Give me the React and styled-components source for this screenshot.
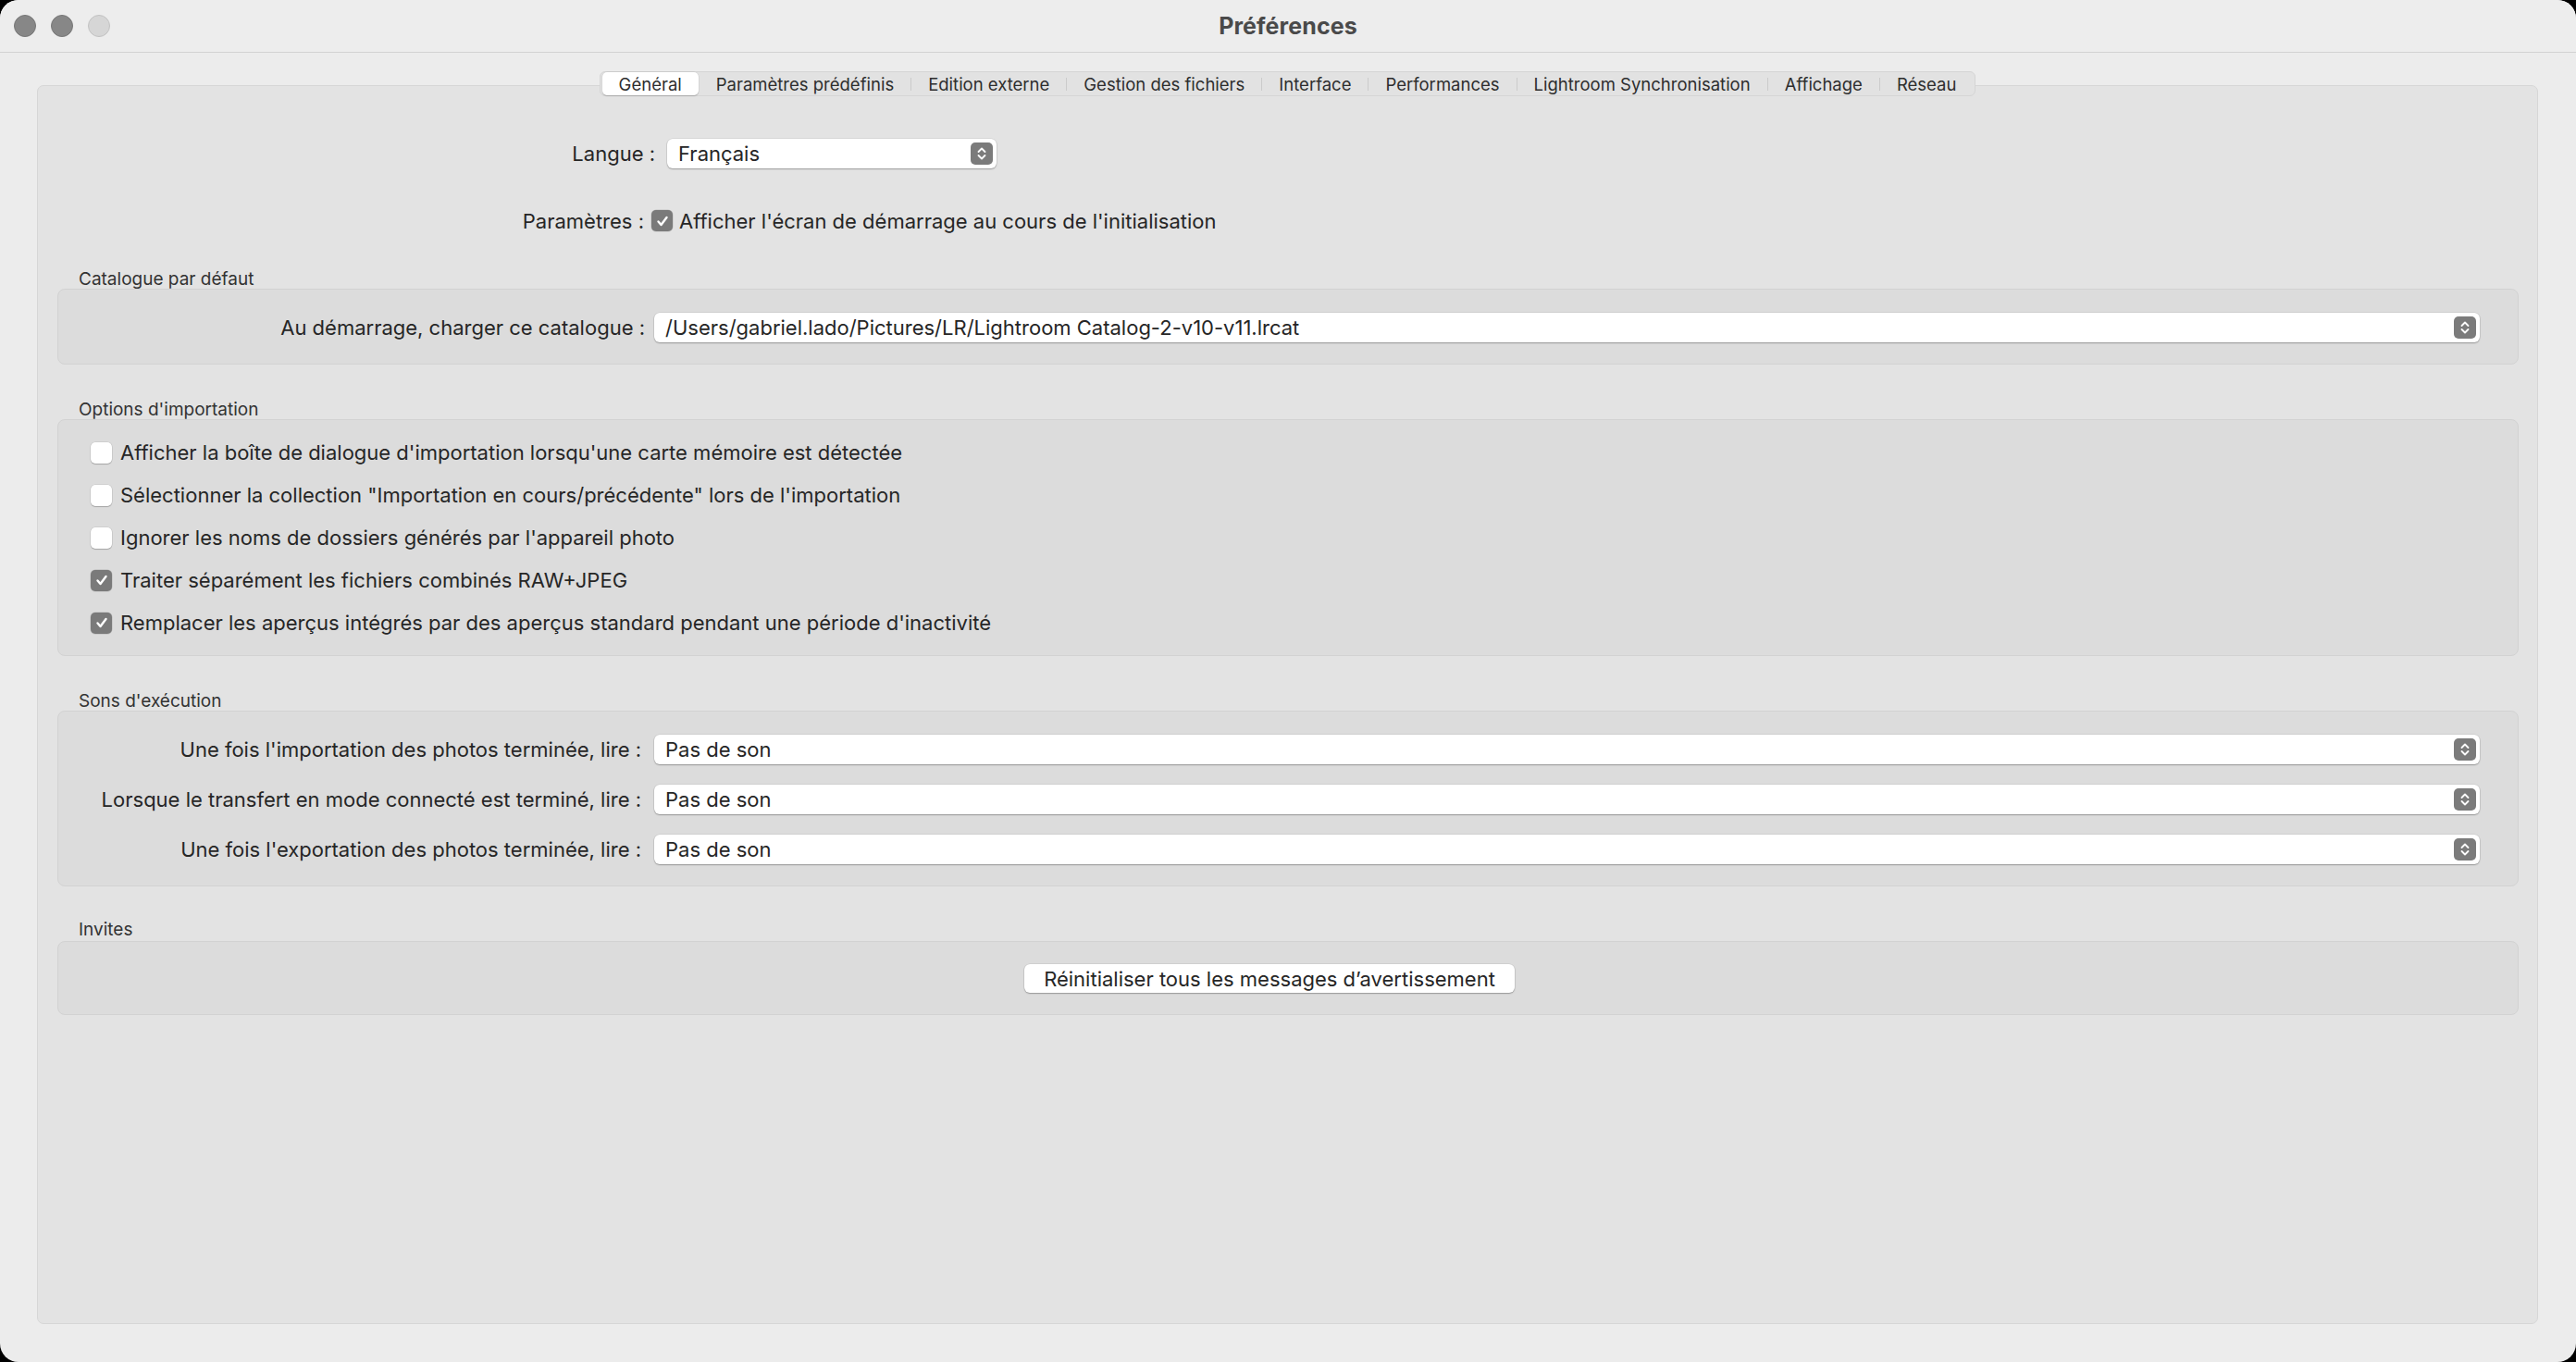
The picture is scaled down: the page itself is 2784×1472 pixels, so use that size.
import React from "react";
import styled, { createGlobalStyle } from "styled-components";

const GlobalStyle = createGlobalStyle`
  html, body {
    margin: 0;
    padding: 0;
    background: #000;
  }
  body {
    font-family: Inter, "Noto Sans", "Liberation Sans", sans-serif;
    color: #262626;
    -webkit-font-smoothing: antialiased;
  }
`;

const tabs = [
  "Général",
  "Paramètres prédéfinis",
  "Edition externe",
  "Gestion des fichiers",
  "Interface",
  "Performances",
  "Lightroom Synchronisation",
  "Affichage",
  "Réseau",
];

const importOptions = [
  { label: "Afficher la boîte de dialogue d'importation lorsqu'une carte mémoire est détectée", checked: false },
  { label: 'Sélectionner la collection "Importation en cours/précédente" lors de l\'importation', checked: false },
  { label: "Ignorer les noms de dossiers générés par l'appareil photo", checked: false },
  { label: "Traiter séparément les fichiers combinés RAW+JPEG", checked: true },
  { label: "Remplacer les aperçus intégrés par des aperçus standard pendant une période d'inactivité", checked: true },
];

const sounds = [
  "Une fois l'importation des photos terminée, lire :",
  "Lorsque le transfert en mode connecté est terminé, lire :",
  "Une fois l'exportation des photos terminée, lire :",
];

const Stepper = () => (
  <StepperBox>
    <svg width="12" height="16" viewBox="0 0 12 16">
      <path d="M2.5 6 L6 2.5 L9.5 6" fill="none" stroke="#fff" strokeWidth="1.8" strokeLinecap="round" strokeLinejoin="round" />
      <path d="M2.5 10 L6 13.5 L9.5 10" fill="none" stroke="#fff" strokeWidth="1.8" strokeLinecap="round" strokeLinejoin="round" />
    </svg>
  </StepperBox>
);

const Select = ({ value, width }) => (
  <SelectBox $width={width}>
    <span>{value}</span>
    <Stepper />
  </SelectBox>
);

const Check = ({ checked }) => (
  <CheckBox $checked={checked}>
    {checked && (
      <svg width="16" height="16" viewBox="0 0 16 16">
        <path d="M3.5 8.5 L6.5 12 L12.5 4" fill="none" stroke="#fff" strokeWidth="2.4" strokeLinecap="round" strokeLinejoin="round" />
      </svg>
    )}
  </CheckBox>
);

const App = () => {
  return (
    <>
      <GlobalStyle />
      <Window>
        <TitleBar>
          <Lights>
            <Light />
            <Light />
            <Light $off />
          </Lights>
          <Title>Préférences</Title>
        </TitleBar>

        <Content>
          <Panel>
            <TabBar>
              {tabs.map((t, i) => (
                <React.Fragment key={t}>
                  {i > 0 && <TabSep $hidden={i === 1} />}
                  <Tab $active={i === 0}>{t}</Tab>
                </React.Fragment>
              ))}
            </TabBar>

            <FormRow $label={667} $gap={13} $mt={45}>
              <Label>Langue :</Label>
              <Select value="Français" width={356} />
            </FormRow>

            <FormRow $label={655} $gap={8} $mt={40}>
              <Label>Paramètres :</Label>
              <CheckLine $gap={7}>
                <Check checked />
                <span>Afficher l'écran de démarrage au cours de l'initialisation</span>
              </CheckLine>
            </FormRow>

            <Heading $mt={37}>Catalogue par défaut</Heading>
            <Group $pad="24px 0 23px">
              <FormRow $label={634} $gap={10}>
                <Label>Au démarrage, charger ce catalogue :</Label>
                <Select value="/Users/gabriel.lado/Pictures/LR/Lightroom Catalog-2-v10-v11.lrcat" />
              </FormRow>
            </Group>

            <Heading $mt={39}>Options d'importation</Heading>
            <Group $pad="12px 0 12px 35px">
              {importOptions.map((o) => (
                <OptionRow key={o.label}>
                  <CheckLine $gap={9}>
                    <Check checked={o.checked} />
                    <span>{o.label}</span>
                  </CheckLine>
                </OptionRow>
              ))}
            </Group>

            <Heading $mt={39}>Sons d'exécution</Heading>
            <Group $pad="24px 0 23px">
              <SoundList>
                {sounds.map((s) => (
                  <FormRow key={s} $label={630} $gap={14}>
                    <Label>{s}</Label>
                    <Select value="Pas de son" />
                  </FormRow>
                ))}
              </SoundList>
            </Group>

            <Heading $mt={37}>Invites</Heading>
            <Group $pad="24px 0 23px" $mt={2}>
              <ButtonRow>
                <PushButton>Réinitialiser tous les messages d’avertissement</PushButton>
              </ButtonRow>
            </Group>
          </Panel>
        </Content>
      </Window>
    </>
  );
};

const Window = styled.div`
  height: 100vh;
  box-sizing: border-box;
  background: #ececec;
  border-radius: 20px;
  overflow: hidden;
  display: flex;
  flex-direction: column;
`;

const TitleBar = styled.div`
  height: 56px;
  flex: none;
  border-bottom: 1px solid #d2d2d2;
  display: flex;
  align-items: center;
  justify-content: center;
  position: relative;
  background: #ededed;
`;

const Lights = styled.div`
  position: absolute;
  left: 15px;
  top: 16px;
  display: flex;
  gap: 16px;
`;

const Light = styled.div`
  width: 24px;
  height: 24px;
  border-radius: 50%;
  box-sizing: border-box;
  background: ${(p) => (p.$off ? "#d6d6d6" : "#878787")};
  border: 1px solid ${(p) => (p.$off ? "#c2c2c2" : "#777")};
`;

const Title = styled.div`
  font-size: 25px;
  font-weight: 700;
  color: #4a4a4a;
  letter-spacing: 0.1px;
`;

const Content = styled.div`
  flex: 1;
  display: flex;
  padding: 35px 41px 41px 40px;
  min-height: 0;
`;

const Panel = styled.div`
  flex: 1;
  display: flex;
  flex-direction: column;
  background: #e3e3e3;
  border: 1px solid #d6d6d6;
  border-radius: 7px;
`;

const TabBar = styled.div`
  align-self: center;
  margin-top: -16px;
  height: 27px;
  box-sizing: border-box;
  display: flex;
  align-items: center;
  padding: 0 2px;
  background: #e2e2e2;
  border: 1px solid #d5d5d5;
  border-radius: 6px;
`;

const Tab = styled.div`
  height: 25px;
  display: flex;
  align-items: center;
  padding: 0 18px;
  font-size: 18.5px;
  color: #2e2e2e;
  border-radius: 5px;
  white-space: nowrap;
  background: ${(p) => (p.$active ? "#fff" : "transparent")};
  box-shadow: ${(p) => (p.$active ? "0 1px 1px rgba(0,0,0,0.18), 0 0 0 0.5px rgba(0,0,0,0.08)" : "none")};
`;

const TabSep = styled.div`
  width: 1px;
  height: 14px;
  background: ${(p) => (p.$hidden ? "transparent" : "#cbcbcb")};
`;

const FormRow = styled.div`
  display: grid;
  grid-template-columns: ${(p) => p.$label}px 1fr;
  column-gap: ${(p) => p.$gap}px;
  align-items: center;
  margin-top: ${(p) => p.$mt || 0}px;
  min-height: 33px;
`;

const Label = styled.div`
  text-align: right;
  font-size: 22px;
  white-space: nowrap;
  color: #262626;
`;

const SelectBox = styled.div`
  width: ${(p) => (p.$width ? `${p.$width}px` : "auto")};
  margin-right: ${(p) => (p.$width ? 0 : 41)}px;
  height: 32px;
  box-sizing: border-box;
  display: flex;
  align-items: center;
  justify-content: space-between;
  padding: 0 4px 0 12px;
  background: #fff;
  border-radius: 6px;
  box-shadow: 0 1px 1.5px rgba(0, 0, 0, 0.28), 0 0 0 0.5px rgba(0, 0, 0, 0.1);
  font-size: 22px;
  color: #262626;
  white-space: nowrap;
`;

const StepperBox = styled.div`
  width: 24px;
  height: 24px;
  border-radius: 5px;
  background: #7b7b7b;
  display: flex;
  align-items: center;
  justify-content: center;
  flex: none;
`;

const CheckLine = styled.div`
  display: flex;
  align-items: center;
  gap: ${(p) => p.$gap}px;
  font-size: 22px;
  color: #262626;
  white-space: nowrap;
`;

const CheckBox = styled.div`
  width: 23px;
  height: 23px;
  box-sizing: border-box;
  border-radius: 5px;
  flex: none;
  display: flex;
  align-items: center;
  justify-content: center;
  background: ${(p) => (p.$checked ? "#7a7a7a" : "#fff")};
  box-shadow: ${(p) =>
    p.$checked
      ? "0 0 0 0.5px rgba(0,0,0,0.15)"
      : "0 1px 1px rgba(0,0,0,0.2), 0 0 0 0.5px rgba(0,0,0,0.12)"};
`;

const Heading = styled.div`
  margin-top: ${(p) => p.$mt}px;
  margin-left: 44px;
  height: 20px;
  line-height: 20px;
  font-size: 19px;
  color: #333;
`;

const Group = styled.div`
  margin: ${(p) => p.$mt || 0}px 20px 0 21px;
  padding: ${(p) => p.$pad};
  background: #dcdcdc;
  border: 1px solid #d2d2d2;
  border-radius: 8px;
`;

const OptionRow = styled.div`
  height: 46px;
  display: flex;
  align-items: center;
`;

const SoundList = styled.div`
  display: flex;
  flex-direction: column;
  gap: 21px;
`;

const ButtonRow = styled.div`
  display: flex;
  justify-content: center;
  padding-right: 40px;
`;

const PushButton = styled.button`
  height: 31px;
  padding: 0 21px;
  border: none;
  border-radius: 6px;
  background: #fff;
  box-shadow: 0 1px 1.5px rgba(0, 0, 0, 0.28), 0 0 0 0.5px rgba(0, 0, 0, 0.1);
  font-family: inherit;
  font-size: 22px;
  color: #262626;
`;

export default App;
